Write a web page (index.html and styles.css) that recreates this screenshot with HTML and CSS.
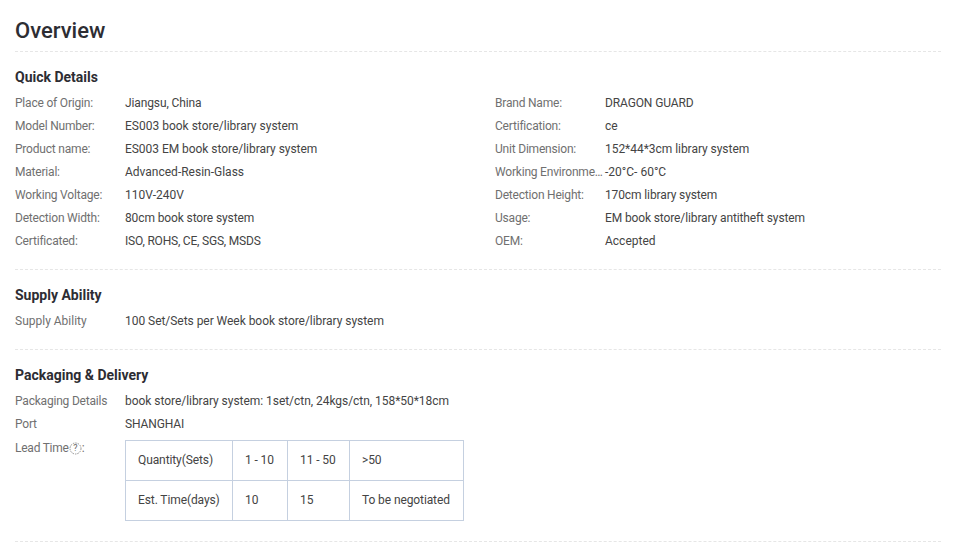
FILE: index.html
```html
<!DOCTYPE html>
<html lang="en">
<head>
<meta charset="utf-8">
<title>Overview</title>
<link rel="stylesheet" href="styles.css">
</head>
<body>
<main class="page">
  <h1 class="title">Overview</h1>
  <section class="section quick">
    <h2 class="heading">Quick Details</h2>
    <div class="grid">
      <div class="row"><span class="label">Place of Origin:</span><span class="value tight">Jiangsu, China</span></div>
      <div class="row"><span class="label">Brand Name:</span><span class="value tight">DRAGON GUARD</span></div>
      <div class="row"><span class="label">Model Number:</span><span class="value">ES003 book store/library system</span></div>
      <div class="row"><span class="label">Certification:</span><span class="value">ce</span></div>
      <div class="row"><span class="label">Product name:</span><span class="value slight">ES003 EM book store/library system</span></div>
      <div class="row"><span class="label">Unit Dimension:</span><span class="value slight">152*44*3cm library system</span></div>
      <div class="row"><span class="label">Material:</span><span class="value">Advanced-Resin-Glass</span></div>
      <div class="row"><span class="label">Working Environment:</span><span class="value">-20°C- 60°C</span></div>
      <div class="row"><span class="label">Working Voltage:</span><span class="value">110V-240V</span></div>
      <div class="row"><span class="label">Detection Height:</span><span class="value tight">170cm library system</span></div>
      <div class="row"><span class="label">Detection Width:</span><span class="value tight">80cm book store system</span></div>
      <div class="row"><span class="label">Usage:</span><span class="value tight">EM book store/library antitheft system</span></div>
      <div class="row"><span class="label">Certificated:</span><span class="value tighter">ISO, ROHS, CE, SGS, MSDS</span></div>
      <div class="row"><span class="label">OEM:</span><span class="value">Accepted</span></div>
    </div>
  </section>
  <section class="section supply">
    <h2 class="heading">Supply Ability</h2>
    <div class="row"><span class="label open">Supply Ability</span><span class="value slight">100 Set/Sets per Week book store/library system</span></div>
  </section>
  <section class="section packaging">
    <h2 class="heading">Packaging &amp; Delivery</h2>
    <div class="row"><span class="label">Packaging Details</span><span class="value slight">book store/library system: 1set/ctn, 24kgs/ctn, 158*50*18cm</span></div>
    <div class="row"><span class="label">Port</span><span class="value tight">SHANGHAI</span></div>
    <div class="row lead">
      <span class="label lead-label">Lead Time<span class="help"><svg class="help-icon" viewBox="0 0 13 13" aria-hidden="true"><circle cx="6.5" cy="6.5" r="5.5"/></svg><span class="help-mark">?</span></span>:</span>
      <table class="lead-table">
        <tr><td class="c1">Quantity(Sets)</td><td class="c2">1 - 10</td><td class="c3">11 - 50</td><td class="c4">&gt;50</td></tr>
        <tr><td class="c1">Est. Time(days)</td><td class="c2">10</td><td class="c3">15</td><td class="c4">To be negotiated</td></tr>
      </table>
    </div>
  </section>
</main>
</body>
</html>
```
FILE: styles.css
```css
* { box-sizing: border-box; }
html, body { margin: 0; padding: 0; background: #fff; }
body { font-family: Roboto, "Liberation Sans", sans-serif; font-size: 12px; color: #444; height: 544px; overflow: hidden; }
.page { padding: 0 16px 0 15px; }
.title { margin: 0; height: 52px; padding-top: 18px; font-size: 22px; line-height: 26px; font-weight: 500; color: #2d2d33; border-bottom: 1px dashed #e6e6e6; }
.section { border-bottom: 1px dashed #e6e6e6; }
.quick { height: 218px; padding-top: 16px; }
.supply { height: 80px; padding-top: 16px; }
.packaging { height: 192px; padding-top: 16px; }
.heading { margin: 0 0 6px; font-size: 14px; line-height: 18px; font-weight: 700; color: #2d2d33; }
.grid { display: grid; grid-template-columns: 480px 1fr; }
.row { display: flex; height: 23px; line-height: 23px; }
.label { flex: none; width: 110px; color: #707070; letter-spacing: -0.2px; white-space: nowrap; overflow: hidden; text-overflow: ellipsis; }
.label.open { letter-spacing: 0; }
.lead-label { padding-top: 1px; letter-spacing: -0.24px; }
.value { color: #444; white-space: nowrap; }
.slight { letter-spacing: -0.04px; }
.tight { letter-spacing: -0.12px; }
.tighter { letter-spacing: -0.2px; }
.lead { height: auto; }
.help { position: relative; display: inline-block; width: 13px; height: 13px; vertical-align: -3px; }
.help-icon { display: block; width: 13px; height: 13px; fill: none; stroke: #8f8f8f; stroke-width: 1; stroke-dasharray: 1.5 1; }
.help-mark { position: absolute; inset: 0; font-size: 9px; line-height: 13px; text-align: center; color: #666; }
.lead-table { border-collapse: collapse; margin-top: 4px; color: #444; letter-spacing: -0.1px; }
.lead-table td { height: 40px; padding: 0 12px; border: 1px solid #c5d0e0; white-space: nowrap; }
.c1 { width: 107px; }
.c2 { width: 55px; }
.c3 { width: 62px; }
.c4 { width: 114px; }
```
